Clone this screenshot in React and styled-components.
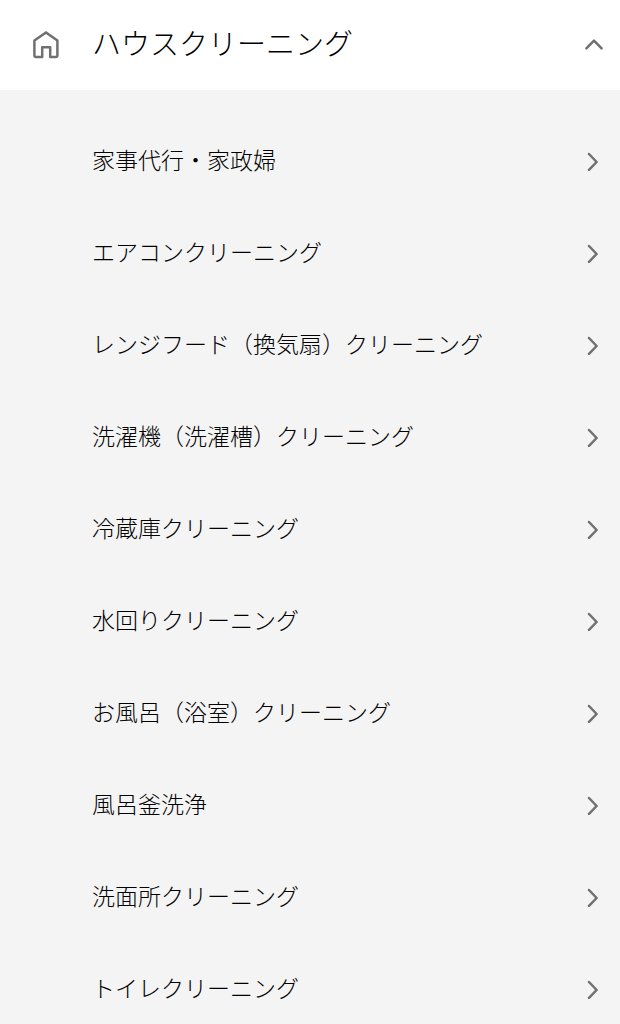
import { useState } from 'react';
import styled, { createGlobalStyle } from 'styled-components';

const services = [
    '家事代行・家政婦',
    'エアコンクリーニング',
    'レンジフード（換気扇）クリーニング',
    '洗濯機（洗濯槽）クリーニング',
    '冷蔵庫クリーニング',
    '水回りクリーニング',
    'お風呂（浴室）クリーニング',
    '風呂釜洗浄',
    '洗面所クリーニング',
    'トイレクリーニング',
];

const GlobalStyle = createGlobalStyle`
    *, *::before, *::after {
        box-sizing: border-box;
    }
    body {
        margin: 0;
        background: #f4f4f4;
        color: #000;
        font-family: "Liberation Sans", "Noto Sans CJK JP", sans-serif;
        font-weight: 300;
    }
`;

const StyledHeader = styled.button`
    display: flex;
    align-items: center;
    width: 100%;
    height: 90px;
    padding: 0 16px 0 32px;
    border: 0;
    background: #fff;
    color: inherit;
    font: inherit;
    font-size: 29px;
    line-height: 40px;
    text-align: left;
    cursor: pointer;
`;

const StyledTitle = styled.span`
    flex: 1;
    margin-left: 32px;
`;

const StyledIcon = styled.svg`
    flex: none;
    fill: none;
    stroke: #707070;
    stroke-width: 2.5;
    stroke-linecap: round;
    stroke-linejoin: round;
    transform: ${props => props.$flipped ? 'rotate(180deg)' : 'none'};
`;

const StyledList = styled.ul`
    margin: 0;
    padding: 25px 0;
    list-style: none;
`;

const StyledLink = styled.a`
    display: flex;
    align-items: center;
    justify-content: space-between;
    height: 92px;
    padding: 0 20px 0 92px;
    color: inherit;
    font-size: 23px;
    line-height: 32px;
    text-decoration: none;
`;

const ServiceItem = (props) => {
    return(
        <li>
            <StyledLink href="#">
                <span>{props.name}</span>
                <StyledIcon width="14" height="20" viewBox="0 0 14 20" aria-hidden="true">
                    <path d="M3 3 L10.6 11 L3 18.8" />
                </StyledIcon>
            </StyledLink>
        </li>
    )
}

const App = () => {
    const [open, setOpen] = useState(true);

    return(
        <>
            <GlobalStyle />
            <StyledHeader type="button" aria-expanded={open} onClick={() => setOpen(!open)}>
                <StyledIcon width="28" height="30" viewBox="0 0 28 30" aria-hidden="true">
                    <path d="M3.6 27 Q2.4 27 2.4 25.8 V10.6 L14 2.4 L25.4 10.6 V25.8 Q25.4 27 24.2 27 H18.2 V17.2 H10.2 V27 Z" />
                </StyledIcon>
                <StyledTitle>ハウスクリーニング</StyledTitle>
                <StyledIcon width="20" height="14" viewBox="0 0 20 14" $flipped={!open} aria-hidden="true">
                    <path d="M2.4 10.4 L10 2.7 L17.6 10.4" />
                </StyledIcon>
            </StyledHeader>
            {open && (
                <StyledList>
                    {services.map(name => <ServiceItem key={name} name={name} />)}
                </StyledList>
            )}
        </>
    )
}
export default App;
